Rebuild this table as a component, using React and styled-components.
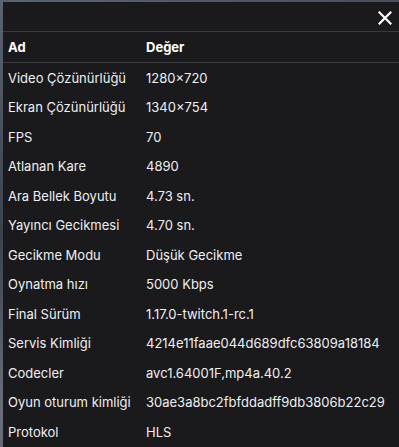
import styled, { createGlobalStyle } from "styled-components";

const GlobalStyle = createGlobalStyle`
  html, body {
    margin: 0;
    padding: 0;
  }
  body {
    width: 399px;
    height: 447px;
    overflow: hidden;
    background: linear-gradient(160deg, #5a6470 0%, #3b424c 40%, #6b7078 70%, #4a4f57 100%);
    font-family: Inter, "Noto Sans", sans-serif;
  }
`;

const stats = [
  ["Video Çözünürlüğü", "1280×720"],
  ["Ekran Çözünürlüğü", "1340×754"],
  ["FPS", "70"],
  ["Atlanan Kare", "4890"],
  ["Ara Bellek Boyutu", "4.73 sn."],
  ["Yayıncı Gecikmesi", "4.70 sn."],
  ["Gecikme Modu", "Düşük Gecikme"],
  ["Oynatma hızı", "5000 Kbps"],
  ["Final Sürüm", "1.17.0-twitch.1-rc.1"],
  ["Servis Kimliği", "4214e11faae044d689dfc63809a18184"],
  ["Codecler", "avc1.64001F,mp4a.40.2"],
  ["Oyun oturum kimliği", "30ae3a8bc2fbfddadff9db3806b22c29"],
  ["Protokol", "HLS"],
];

const App = () => {
  return (
    <>
      <GlobalStyle />
      <Panel>
        <TopBar>
          <CloseButton aria-label="Kapat">
            <svg width="14" height="14" viewBox="0 0 14 14">
              <path
                d="M1.5 1.5 L12.5 12.5 M12.5 1.5 L1.5 12.5"
                stroke="#fff"
                strokeWidth="2.2"
                strokeLinecap="square"
              />
            </svg>
          </CloseButton>
        </TopBar>
        <Table>
          <HeadRow>
            <HeadCell>Ad</HeadCell>
            <HeadCell>Değer</HeadCell>
          </HeadRow>
          {stats.map(([name, value]) => (
            <Row key={name}>
              <Cell>{name}</Cell>
              <Cell>{value}</Cell>
            </Row>
          ))}
        </Table>
      </Panel>
    </>
  );
};

const Panel = styled.div`
  margin: 2px 0 0 3px;
  width: 396px;
  height: 445px;
  background-color: #1a1a1d;
  display: flex;
  flex-direction: column;
`;

const TopBar = styled.div`
  height: 29px;
  display: flex;
  justify-content: flex-end;
  align-items: center;
  padding-right: 4px;
`;

const CloseButton = styled.button`
  background: none;
  border: none;
  padding: 0;
  width: 20px;
  height: 20px;
  display: flex;
  align-items: center;
  justify-content: center;
  cursor: pointer;
  margin-top: 2px;
`;

const Table = styled.div`
  border-top: 1px solid #3a3a3e;
  display: flex;
  flex-direction: column;
`;

const Row = styled.div`
  display: grid;
  grid-template-columns: 138px 1fr;
  height: 29.5px;
  align-items: center;
`;

const HeadRow = styled(Row)`
  height: 30px;
  border-bottom: 1px solid #3a3a3e;
`;

const Cell = styled.div`
  padding-left: 5px;
  font-size: 13px;
  color: #efeff1;
  white-space: nowrap;
`;

const HeadCell = styled(Cell)`
  font-weight: 700;
  color: #ffffff;
`;

export default App;
